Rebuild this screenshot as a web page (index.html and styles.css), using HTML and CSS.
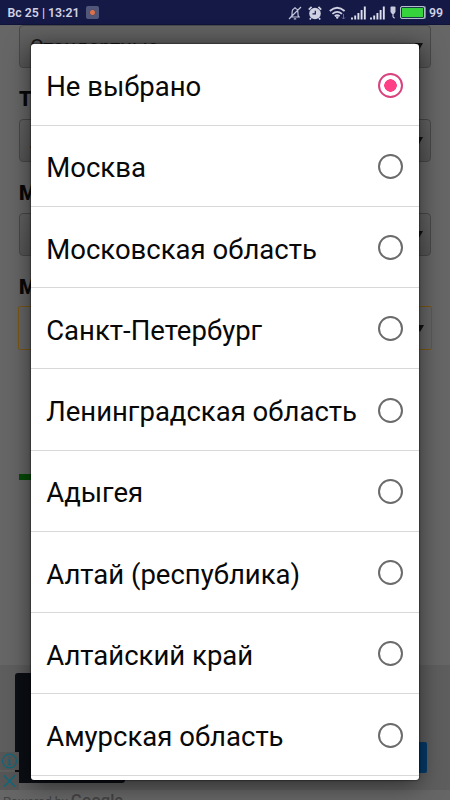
FILE: index.html
```
<!DOCTYPE html>
<html lang="ru">
<head>
    <meta charset="utf-8">
    <title>Выбор региона</title>
    <link rel="stylesheet" href="styles.css">
</head>
<body>
    <div class="statusbar">
        <span class="clock">Вс 25 | 13:21</span>
        <span class="rec"></span>
        <div class="status-icons">
            <!-- Muted bell -->
            <svg width="14" height="14" viewBox="0 0 14 14" fill="none" stroke="#c3c5da" stroke-width="1.2">
                <path d="M2 11h10M3.300 11c.8-1 .8-2 .8-4.500C4.100 4 5.300 2.500 7 2.500S9.900 4 9.900 6.500c0 2.500 0 3.500.8 4.500M5.800 12.800h2.400M7 2.500V1M1 13L13 1"/>
            </svg>
            <!-- Alarm -->
            <svg class="alarm" width="14" height="14" viewBox="0 0 14 14">
                <circle cx="7" cy="7.500" r="5.800" fill="#d0d2e4"/>
                <path d="M.8 3.600L3.600.8M13.200 3.600L10.400.8M3 12L1.800 13.500M11 12l1.200 1.500" stroke="#d0d2e4" stroke-width="1.700"/>
                <path d="M4.500 7.800H7.300V4.800" fill="none" stroke="#151946" stroke-width="1.200"/>
            </svg>
            <!-- Wi-Fi -->
            <svg class="wifi" width="17" height="14" viewBox="0 0 17 14" fill="none" stroke="#d0d2e4" stroke-width="1.800">
                <path d="M.8 5Q8.200-1.500 15.600 5M3.400 7.900Q8.200 3.800 13 7.900M5.800 10.300Q8.200 8.200 10.600 10.300"/>
                <circle cx="8.200" cy="11.500" r="1.200" fill="#d0d2e4" stroke="none"/>
                <path d="M14.500 8v5M13 11.500l1.500 1.500 1.500-1.500" stroke="#666a90" stroke-width="1"/>
            </svg>
            <!-- Signal -->
            <svg class="signal" width="15" height="14" viewBox="0 0 15 14" stroke="#dddfed" stroke-width="1.900">
                <path d="M1 13.500v-2M4.200 13.500V9.500M7.400 13.500V7M10.600 13.500V4M13.800 13.500V.5"/>
            </svg>
            <svg class="signal" width="15" height="14" viewBox="0 0 15 14" stroke="#dddfed" stroke-width="1.900">
                <path d="M1 13.500v-2M4.200 13.500V9.500M7.400 13.500V7M10.600 13.500V4M13.800 13.500V.5"/>
            </svg>
            <!-- Charger plug -->
            <svg class="plug" width="6" height="13" viewBox="0 0 6 13">
                <path d="M.5 1.500Q.5.500 1.500.500h3Q5.500.500 5.500 1.500V6L4 8H2L.5 6z" fill="#c8cadd"/>
                <path d="M3 7v3.500Q3 12 5 12" fill="none" stroke="#c8cadd" stroke-width="1.200"/>
            </svg>
            <span class="battery"></span>
            <span class="percent">99</span>
        </div>
    </div>

    <div class="page">
        <div class="select first"><span>Стандартные</span><i class="arrow"></i></div>
        <label>Т</label>
        <div class="select"><span>Л</span><i class="arrow"></i></div>
        <label>М</label>
        <div class="select"><span></span><i class="arrow"></i></div>
        <label>М</label>
        <div class="select focused"><span></span><i class="arrow"></i></div>
        <div class="line"></div>
        <div class="ad">
            <div class="ad-picture"></div>
            <div class="ad-button"></div>
            <div class="ad-choices">
                <svg width="19" height="18" viewBox="0 0 19 18" fill="none" stroke="#126678" stroke-width="1.300">
                    <circle cx="9.500" cy="9" r="6.900"/>
                    <path d="M9.500 7.500v5.500M9.500 4.500v1.800" stroke-width="1.800"/>
                    <path d="M8 8h1.500M8 12.700h3" stroke-width="1"/>
                </svg>
                <svg width="19" height="18" viewBox="0 0 19 18" stroke="#126678" stroke-width="1.600">
                    <path d="M4 3.500l11 11M15 3.500l-11 11"/>
                </svg>
            </div>
        </div>
        <div class="powered">Powered by <b>Google</b></div>
    </div>

    <div class="popup">
        <div class="option selected"><span>Не выбрано</span><i class="radio"></i></div>
        <div class="option"><span>Москва</span><i class="radio"></i></div>
        <div class="option"><span>Московская область</span><i class="radio"></i></div>
        <div class="option"><span>Санкт-Петербург</span><i class="radio"></i></div>
        <div class="option"><span>Ленинградская область</span><i class="radio"></i></div>
        <div class="option"><span>Адыгея</span><i class="radio"></i></div>
        <div class="option"><span>Алтай (республика)</span><i class="radio"></i></div>
        <div class="option"><span>Алтайский край</span><i class="radio"></i></div>
        <div class="option"><span>Амурская область</span><i class="radio"></i></div>
    </div>
</body>
</html>
```
FILE: styles.css
```
* {
    box-sizing: border-box;
}

body {
    margin: 0;
    height: 800px;
    overflow: hidden;
    position: relative;
    background-color: #666666;
    font-family: Roboto, sans-serif;
}

/* Status bar */
.statusbar {
    display: flex;
    align-items: center;
    height: 25px;
    padding: 1px 7px 0 7.5px;
    background-color: #151946;
    border-bottom: 1px solid #10133a;
    color: #d0d2e4;
    font-size: 12.3px;
    font-weight: 600;
}

.rec {
    width: 13px;
    height: 13px;
    margin-left: 7px;
    border-radius: 2px;
    background: radial-gradient(circle, #d8714c 2px, #5b5064 3px, #51567b 4px);
}

.status-icons {
    display: flex;
    align-items: center;
    margin-left: auto;
}

.alarm {
    margin-left: 6px;
}

.wifi {
    margin-left: 7px;
}

.signal {
    margin-left: 4px;
}

.wifi + .signal {
    margin-left: 5px;
}

.plug {
    margin-left: 5px;
}

.battery {
    width: 25px;
    height: 13px;
    margin-left: 4px;
    border: 1px solid #b5bccb;
    border-radius: 2px;
    background-color: #35d43c;
    box-shadow: inset 0 0 0 1px #173c46, 1px 0 0 #7d839d;
}

.percent {
    margin-left: 4px;
}

/* Page under the popup */
.page {
    height: 775px;
    overflow: hidden;
}

.page label {
    display: block;
    height: 51px;
    margin: 0 19px;
    padding-top: 20px;
    font-size: 20px;
    line-height: 23px;
    font-weight: 900;
    color: #090909;
}

.select {
    display: flex;
    align-items: center;
    justify-content: space-between;
    height: 43px;
    margin: 0 19px;
    padding: 0 7px 0 10px;
    border: 1px solid #484848;
    border-radius: 4px;
    background: linear-gradient(#626262, #565656);
    color: #181818;
    font-size: 20.5px;
}

.select.focused {
    height: 44px;
    margin: -1px 18px 0;
    border: 1px solid #7a5716;
    border-radius: 2px;
    background: #666666;
}

.arrow {
    border: 4px solid transparent;
    border-top: 7px solid #111111;
    border-bottom: 0;
}

.line {
    width: 120px;
    height: 6px;
    margin: 124px 19px 0;
    background-color: #064a06;
}

.ad {
    position: relative;
    height: 125px;
    margin-top: 185px;
    background-color: #5e5e5e;
}

.ad-picture {
    position: absolute;
    left: 15px;
    top: 8px;
    width: 110px;
    height: 110px;
    border-radius: 3px;
    background-color: #0b0e14;
}

.ad-button {
    position: absolute;
    right: 23px;
    top: 77px;
    width: 110px;
    height: 31px;
    border-radius: 2px;
    background-color: #053a69;
}

.ad-choices {
    position: absolute;
    left: 0;
    top: 87px;
    display: flex;
    flex-direction: column;
    gap: 2px;
}

.ad-choices svg {
    background-color: #565656;
}

.powered {
    padding: 2px 3px 0;
    color: #434343;
    font-size: 12.5px;
    line-height: 18px;
    white-space: nowrap;
}

.powered b {
    font-size: 16.5px;
    font-weight: 500;
}

/* Options list */
.popup {
    position: absolute;
    left: 31px;
    top: 44px;
    width: 388px;
    height: 736px;
    padding-top: 0.4px;
    overflow: hidden;
    border-radius: 3px;
    background-color: #ffffff;
    box-shadow: 0 0 2px #000000, 0 4px 24px rgba(0, 0, 0, 0.55);
}

.option {
    display: flex;
    align-items: center;
    justify-content: space-between;
    height: 81.25px;
    padding: 4px 16.5px 0 15.2px;
    border-bottom: 1px solid #d8d8d8;
    color: #080808;
    font-size: 27.52px;
    white-space: nowrap;
}

.radio {
    width: 25px;
    height: 25px;
    margin-top: -3px;
    border: 2px solid #6b6b6b;
    border-radius: 50%;
}

.selected .radio {
    border-color: #d8427f;
    background: radial-gradient(circle, #ff3f86 6px, #ffffff 6.5px);
}
```
